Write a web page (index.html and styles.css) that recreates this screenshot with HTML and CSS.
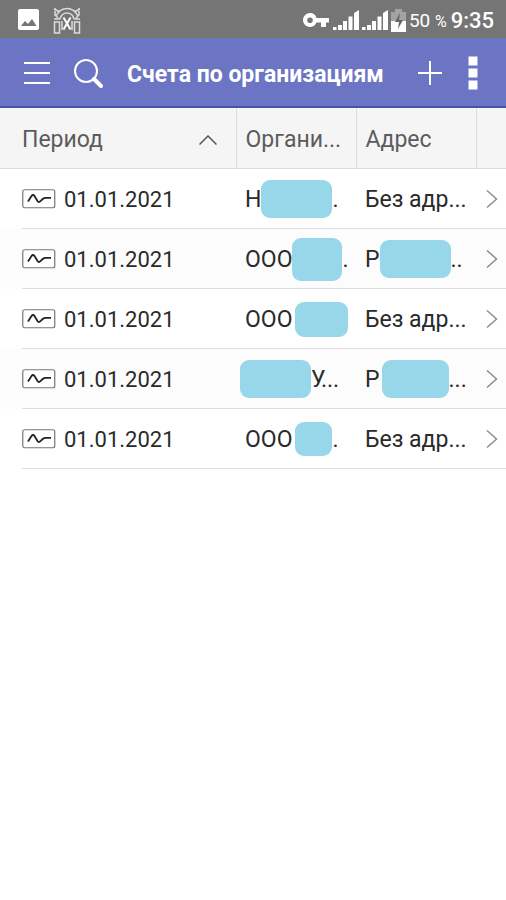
FILE: index.html
```html
<!DOCTYPE html>
<html lang="ru">
<head>
    <meta charset="UTF-8">
    <meta name="viewport" content="width=device-width, initial-scale=1.0">
    <title>Счета по организациям</title>
    <link rel="stylesheet" href="styles.css">
</head>
<body>
    <svg class="sprite" aria-hidden="true">
        <symbol id="doc" viewBox="0 0 34 20">
            <rect x="0.75" y="0.75" width="32" height="18" rx="2" fill="#fff" stroke="#777" stroke-width="1.2"/>
            <path d="M6 12.500L9.500 7q1.500-2 3 0l3 5q1.500 2 3 0l2.500-2.200q1-1 2.500-1H29" fill="none" stroke="#222" stroke-width="1.8"/>
        </symbol>
        <symbol id="next" viewBox="0 0 12 20">
            <path d="M1 1.500l9.500 8.500L1 18.500" fill="none" stroke="#8c8c8c" stroke-width="1.500"/>
        </symbol>
        <symbol id="signal" viewBox="0 0 27 20">
            <path d="M0 17h3.500v3H0zM5 15h4v5H5zM10 11h4v9h-4zM15.500 6.500h4V20h-4zM21 3l5-3v20h-5z" fill="#fff"/>
        </symbol>
    </svg>

    <div class="status">
        <svg class="picture" width="22" height="22" viewBox="0 0 22 22">
            <rect width="21" height="21" rx="2" fill="#fff"/>
            <path d="M3 17l4-5 3 3 4-5 4.500 7z" fill="#757575"/>
        </svg>
        <svg class="tower" width="28" height="27" viewBox="0 0 28 27" fill="none" stroke="#dcdcdc" stroke-width="1.500">
            <path d="M3 9C8-1 20-1 25 9M7 12C9 4 19 4 21 12M1 2l6 3M27 2l-6 3M2 1v7l3 3M26 1v7l-3 3M1 12h6M21 12h6"/>
            <rect x="1.500" y="15" width="5" height="11"/>
            <rect x="21.500" y="15" width="5" height="11"/>
            <path d="M10.500 10.500l7 12M17.500 10.500l-7 12" stroke="#fff" stroke-width="2"/>
            <path d="M9 14v9M19 14v9"/>
        </svg>
        <span class="fill"></span>
        <svg class="key" width="26" height="15" viewBox="0 0 26 15">
            <path d="M7 0a7 7 0 1 0 6.500 9.500H18V14h5V9.500h3V5H13.500A7 7 0 0 0 7 0zm0 4.500a2.800 2.800 0 1 1 0 5.600 2.800 2.800 0 0 1 0-5.600z" fill="#fff"/>
        </svg>
        <svg class="signal" width="27" height="20"><use href="#signal"/></svg>
        <svg class="signal" width="27" height="20"><use href="#signal"/></svg>
        <svg class="battery" width="15" height="23" viewBox="0 0 15 23">
            <path d="M4 0h7v3h4v9H0V3h4z" fill="#a3a3a3"/>
            <path d="M0 12h15v11H0z" fill="#fff"/>
            <path d="M9 4l-5 9h4l-1 7 5-9H8z" fill="#666"/>
        </svg>
        <span class="percent">50 <small>%</small></span>
        <span class="clock">9:35</span>
    </div>

    <header class="toolbar">
        <button class="menu" aria-label="Меню">
            <svg width="26" height="24" viewBox="0 0 26 24"><path d="M0 2h26M0 12h26M0 22h26" stroke="#fff" stroke-width="2"/></svg>
        </button>
        <button class="search" aria-label="Поиск">
            <svg width="29" height="29" viewBox="0 0 29 29" fill="none" stroke="#fff">
                <circle cx="12" cy="12" r="11" stroke-width="2"/>
                <path d="M20 20l7 7" stroke-width="4" stroke-linecap="round"/>
            </svg>
        </button>
        <h1>Счета по организациям</h1>
        <button class="add" aria-label="Добавить">
            <svg width="24" height="24" viewBox="0 0 24 24"><path d="M12 0v24M0 12h24" stroke="#fff" stroke-width="2"/></svg>
        </button>
        <button class="more" aria-label="Ещё">
            <svg width="10" height="34" viewBox="0 0 10 34"><path d="M0.500 0.500h9v9h-9zM0.500 12.500h9v9h-9zM0.500 24.500h9v9h-9z" fill="#fff"/></svg>
        </button>
    </header>

    <table class="list">
        <thead>
            <tr>
                <th class="period">
                    <div class="head">Период
                        <svg width="18" height="10" viewBox="0 0 18 10"><path d="M0.500 9.500L9 1l8.500 8.500" fill="none" stroke="#555" stroke-width="1.500"/></svg>
                    </div>
                </th>
                <th class="org"><div class="head">Органи...</div></th>
                <th class="address"><div class="head">Адрес</div></th>
                <th class="open"></th>
            </tr>
        </thead>
        <tbody>
            <tr>
                <td class="period"><div class="cell"><svg class="doc"><use href="#doc"/></svg>01.01.2021</div></td>
                <td><div class="cell">Н<span class="mask wide"></span>.</div></td>
                <td><div class="cell">Без адр...</div></td>
                <td><div class="cell"><svg class="next"><use href="#next"/></svg></div></td>
            </tr>
            <tr>
                <td class="period"><div class="cell"><svg class="doc"><use href="#doc"/></svg>01.01.2021</div></td>
                <td><div class="cell">ООО<span class="mask tall"></span>.</div></td>
                <td><div class="cell">Р<span class="mask wide"></span>..</div></td>
                <td><div class="cell"><svg class="next"><use href="#next"/></svg></div></td>
            </tr>
            <tr>
                <td class="period"><div class="cell"><svg class="doc"><use href="#doc"/></svg>01.01.2021</div></td>
                <td><div class="cell">ООО<span class="mask medium"></span></div></td>
                <td><div class="cell">Без адр...</div></td>
                <td><div class="cell"><svg class="next"><use href="#next"/></svg></div></td>
            </tr>
            <tr>
                <td class="period"><div class="cell"><svg class="doc"><use href="#doc"/></svg>01.01.2021</div></td>
                <td><div class="cell"><span class="mask wide lead"></span>У...</div></td>
                <td><div class="cell">Р<span class="mask broad"></span>...</div></td>
                <td><div class="cell"><svg class="next"><use href="#next"/></svg></div></td>
            </tr>
            <tr>
                <td class="period"><div class="cell"><svg class="doc"><use href="#doc"/></svg>01.01.2021</div></td>
                <td><div class="cell">ООО<span class="mask small"></span>.</div></td>
                <td><div class="cell">Без адр...</div></td>
                <td><div class="cell"><svg class="next"><use href="#next"/></svg></div></td>
            </tr>
        </tbody>
    </table>
</body>
</html>
```
FILE: styles.css
```css
* {
    box-sizing: border-box;
}
body {
    margin: 0;
    background-color: #fff;
    color: #2a2a2a;
    font-family: Roboto, sans-serif;
    font-size: 23px;
}
svg {
    flex: none;
}
.sprite {
    display: none;
}

/* status bar */
.status {
    display: flex;
    align-items: center;
    height: 38px;
    padding: 2px 12px 0 18px;
    background-color: #757575;
    color: #fff;
    font-size: 22px;
}
.tower {
    margin-left: 13px;
}
.fill {
    flex: 1;
}
.key {
    margin-right: 4px;
}
.signal {
    margin-right: 2px;
}
.percent {
    margin: 0 4px 0 3px;
    font-size: 19px;
    white-space: nowrap;
}
.percent small {
    font-size: 16px;
}
.clock {
    font-weight: 500;
}

/* toolbar */
.toolbar {
    display: flex;
    align-items: center;
    height: 70px;
    padding: 2px 28px 0 24px;
    background-color: #6b75c4;
    border-bottom: 2px solid #4355a8;
}
.toolbar button {
    display: flex;
    flex: none;
    padding: 0;
    border: 0;
    background: none;
    cursor: pointer;
}
.toolbar .search {
    margin-left: 24px;
}
.toolbar h1 {
    flex: 1;
    margin: 0 0 0 24px;
    padding-top: 4px;
    color: #fff;
    font-size: 23px;
    font-weight: 700;
    line-height: 28px;
    white-space: nowrap;
}
.toolbar .more {
    margin-left: 26px;
}

/* list */
.list {
    width: 100%;
    border-collapse: collapse;
    table-layout: fixed;
}
.list th,
.list td {
    padding: 0;
    font-weight: 400;
    text-align: left;
    white-space: nowrap;
}
.list th {
    height: 60px;
    background-color: #f5f5f5;
    border-bottom: 1px solid #dcdcdc;
    border-left: 1px solid #dcdcdc;
    color: #5c5c5c;
}
.list th.period {
    border-left: 0;
}
.list .period {
    padding-left: 22px;
}
.org,
.address {
    width: 120px;
}
.open {
    width: 30px;
}
.head {
    display: flex;
    align-items: center;
    justify-content: space-between;
    padding: 4px 0 0 9px;
}
.period .head {
    padding-right: 19px;
    padding-left: 0;
}
.cell {
    display: flex;
    align-items: center;
    height: 60px;
    padding: 2px 0 0 9px;
    border-bottom: 1px solid #dedede;
}
.period .cell {
    padding-left: 0;
    font-size: 22px;
}
tbody tr:nth-child(even) {
    background-color: #fcfcfc;
}
.doc {
    width: 34px;
    height: 20px;
    margin-right: 8px;
}
.next {
    width: 12px;
    height: 20px;
    margin-left: 1px;
}
.mask {
    flex: none;
    height: 38px;
    border-radius: 9px;
    background-color: #98d7e9;
}
.wide {
    width: 71px;
}
.broad {
    width: 67px;
    margin-left: 2px;
}
.tall {
    width: 50px;
    height: 43px;
}
.medium {
    width: 53px;
    height: 35px;
}
.small {
    width: 37px;
    height: 34px;
}
.medium,
.small {
    margin-left: 3px;
}
.lead {
    margin-left: -5px;
}
```
